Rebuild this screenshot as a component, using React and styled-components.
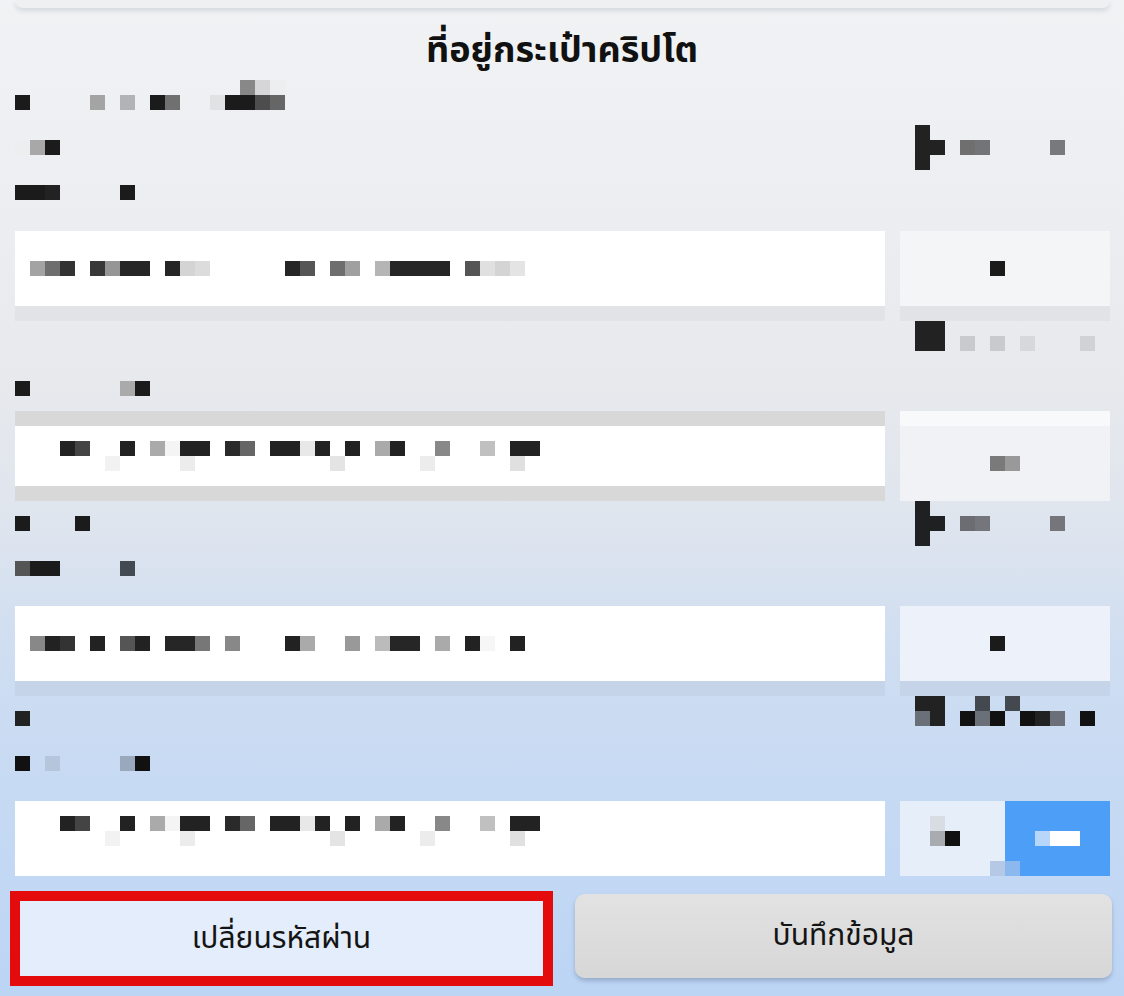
import React from "react";
import styled, { createGlobalStyle } from "styled-components";

const GlobalStyle = createGlobalStyle`
  * { box-sizing: border-box; }
  html, body { margin: 0; padding: 0; }
  body {
    width: 1124px;
    min-height: 996px;
    overflow: hidden;
    font-family: "Noto Sans Thai", "Noto Sans Thai UI", "Loma", "Garuda", "Noto Sans", sans-serif;
    background: linear-gradient(180deg, #f0f2f4 0px, #eceef1 200px, #e7e9ed 380px, #dfe5ee 520px, #d0def1 640px, #c7daf3 780px, #bcd5f5 996px);
  }
`;

const CELL = 15;

const Page = styled.main`
  width: 1124px;
  min-height: 996px;
  display: flex;
  flex-direction: column;
`;

const TopCard = styled.div`
  height: 8px;
  margin: 0 14px 0 15px;
  background: #eef0f2;
  border-radius: 0 0 10px 10px;
  box-shadow: 0 3px 5px rgba(60, 70, 90, 0.14);
`;

const Title = styled.h1`
  margin: 14px 0 0;
  height: 58px;
  line-height: 58px;
  text-align: center;
  font-size: 36px;
  font-weight: 700;
  color: #111;
`;

const Columns = styled.div`
  display: grid;
  grid-template-columns: 870px 210px;
  column-gap: 15px;
  padding: 0 14px 0 15px;
  height: ${(p) => p.$h}px;
`;

const SideLabel = styled.div`
  padding-left: 15px;
`;

const PixelSvg = styled.svg`
  display: block;
`;

const Pixels = ({ cells, w, h }) => (
  <PixelSvg width={w} height={h} viewBox={`0 0 ${w} ${h}`} shapeRendering="crispEdges">
    {cells.map(([r, c, fill, cw = 1, ch = 1], i) => (
      <rect key={i} x={c * CELL} y={r * CELL} width={cw * CELL} height={ch * CELL} fill={fill} />
    ))}
  </PixelSvg>
);

const Box = styled.div`
  height: ${(p) => p.$h}px;
  background: ${(p) => p.$bg};
  border-top: ${(p) => p.$top || 0}px solid ${(p) => p.$topColor || p.$edge || "transparent"};
  border-bottom: ${(p) => p.$bottom || 0}px solid ${(p) => p.$edge || "transparent"};
  overflow: hidden;
`;

const SplitSide = styled.div`
  display: grid;
  grid-template-columns: 105px 105px;
  height: 75px;
`;

const Half = styled.div`
  background: ${(p) => p.$bg};
`;

const ButtonRow = styled.div`
  display: flex;
  align-items: flex-start;
  gap: 22px;
  padding: 15px 12px 0 10px;
`;

const OutlineButton = styled.button`
  width: 543px;
  height: 95px;
  border: 10px solid #e30b0b;
  background: #e3edfb;
  font-family: inherit;
  font-size: 30px;
  color: #141414;
  padding: 0;
`;

const SaveButton = styled.button`
  width: 537px;
  height: 84px;
  margin-top: 3px;
  border: none;
  border-radius: 10px;
  background: linear-gradient(180deg, #e2e2e2 0%, #d7d7d7 100%);
  box-shadow: 0 3px 4px rgba(60, 70, 100, 0.28);
  font-family: inherit;
  font-size: 30px;
  color: #141414;
  padding: 0;
`;

const K = "#1b1b1b";
const D = "#262626";

const header1L = [
  [0, 15, "#888888"], [0, 16, "#d6d6d8"], [0, 17, "#eceef0"],
  [1, 0, K], [1, 5, "#a4a4a4"], [1, 7, "#b1b3b5"], [1, 9, K], [1, 10, "#707070"],
  [1, 13, "#e0e2e4"], [1, 14, K, 2], [1, 16, "#4d4d4d"], [1, 17, "#666666"],
  [4, 0, "#eceef0"], [4, 1, "#a8a8a8"], [4, 2, K],
  [7, 0, K, 2], [7, 2, "#222222"], [7, 7, K],
];
const labelIconR = [
  [3, 0, "#222222", 1, 3], [4, 1, "#222222"], [4, 3, "#6f6f6f"], [4, 4, "#727478"], [4, 9, "#77797c"],
];
const header2L = [[4, 0, K], [4, 7, "#aaaaaa"], [4, 8, K]];
const header2R = [
  [0, 0, "#222222", 2, 2], [1, 3, "#c8cacd"], [1, 5, "#c8cacd"], [1, 7, "#d6d8db"], [1, 11, "#d0d2d5"],
];
const header3L = [
  [1, 0, K], [1, 4, K],
  [4, 0, "#555555"], [4, 1, K, 2], [4, 7, "#444a52"],
];
const header3R = [
  [0, 0, "#1f2022", 1, 3], [1, 1, "#1f2022"], [1, 3, "#6b6d72"], [1, 4, "#74767b"], [1, 9, "#74767b"],
];
const header4L = [
  [1, 0, "#222222"],
  [4, 0, "#111111"], [4, 2, "#b5c5dc"], [4, 7, "#99a8bd"], [4, 8, "#111111"],
];
const header4R = [
  [0, 0, "#222222", 2], [0, 4, "#444950"], [0, 6, "#444950"],
  [1, 0, "#6b7078"], [1, 1, "#222222"], [1, 3, "#111111"], [1, 4, "#6b7078"], [1, 5, "#111111"],
  [1, 7, "#111111"], [1, 8, "#222222"], [1, 9, "#6b7078"], [1, 11, "#111111"],
];

const text1 = [
  [2, 1, "#a3a3a3"], [2, 2, "#6e6e6e"], [2, 3, "#333333"],
  [2, 5, "#383838"], [2, 6, "#969696"], [2, 7, D, 2],
  [2, 10, D], [2, 11, "#d4d4d4"], [2, 12, "#dcdcdc"],
  [2, 18, D], [2, 19, "#555555"], [2, 21, "#6e6e6e"], [2, 22, "#a0a0a0"],
  [2, 24, "#b5b5b5"], [2, 25, D, 4], [2, 30, "#555555"], [2, 31, "#e0e0e0"], [2, 32, "#d4d4d4"], [2, 33, "#e4e4e4"],
];
const addressText = (r) => [
  [r, 3, "#222222"], [r, 4, "#444444"], [r, 7, "#222222"], [r, 9, "#aaaaaa"], [r, 10, "#f4f4f4"],
  [r, 11, "#222222", 2], [r, 14, "#2a2a2a"], [r, 15, "#666666"], [r, 17, "#222222", 2],
  [r, 19, "#e8e8e8"], [r, 20, "#222222"], [r, 22, "#222222"], [r, 24, "#aaaaaa"], [r, 25, "#222222"],
  [r, 28, "#888888"], [r, 31, "#c0c0c0"], [r, 33, "#222222", 2],
  [r + 1, 6, "#f2f2f2"], [r + 1, 11, "#ececec"], [r + 1, 21, "#e4e4e4"], [r + 1, 27, "#ececec"], [r + 1, 33, "#e0e0e0"],
];
const text3 = [
  [2, 1, "#888888"], [2, 2, "#222222"], [2, 3, "#333333"], [2, 5, "#222222"], [2, 7, "#555555"], [2, 8, "#222222"],
  [2, 10, D, 2], [2, 12, "#777777"], [2, 14, "#888888"], [2, 18, "#222222"], [2, 19, "#aaaaaa"],
  [2, 22, "#999999"], [2, 24, "#bbbbbb"], [2, 25, D, 2], [2, 28, "#aaaaaa"], [2, 30, "#222222"],
  [2, 31, "#f6f6f6"], [2, 33, "#222222"],
];

export default function App() {
  return (
    <>
      <GlobalStyle />
      <Page>
        <TopCard />
        <Title>ที่อยู่กระเป๋าคริปโต</Title>

        <Columns $h={151}>
          <Pixels w={300} h={150} cells={header1L} />
          <SideLabel><Pixels w={195} h={150} cells={labelIconR} /></SideLabel>
        </Columns>
        <Columns $h={90}>
          <Box $h={90} $bg="#ffffff" $bottom={15} $edge="#e2e3e6">
            <Pixels w={870} h={75} cells={text1} />
          </Box>
          <Box $h={90} $bg="#f4f5f7" $bottom={15} $edge="#e2e3e6">
            <Pixels w={210} h={75} cells={[[2, 6, K]]} />
          </Box>
        </Columns>

        <Columns $h={90}>
          <Pixels w={300} h={90} cells={header2L} />
          <SideLabel><Pixels w={195} h={90} cells={header2R} /></SideLabel>
        </Columns>
        <Columns $h={90}>
          <Box $h={90} $bg="#ffffff" $top={15} $bottom={15} $edge="#d8d8d8">
            <Pixels w={870} h={60} cells={addressText(1)} />
          </Box>
          <Box $h={90} $bg="#f0f2f5" $top={15} $topColor="#f8f9fb">
            <Pixels w={210} h={75} cells={[[2, 6, "#7a7a7a"], [2, 7, "#999999"]]} />
          </Box>
        </Columns>

        <Columns $h={105}>
          <Pixels w={300} h={105} cells={header3L} />
          <SideLabel><Pixels w={195} h={105} cells={header3R} /></SideLabel>
        </Columns>
        <Columns $h={90}>
          <Box $h={90} $bg="#ffffff" $bottom={15} $edge="#c6d4e9">
            <Pixels w={870} h={75} cells={text3} />
          </Box>
          <Box $h={90} $bg="#edf2fa" $bottom={15} $edge="#c6d4e9">
            <Pixels w={210} h={75} cells={[[2, 6, K]]} />
          </Box>
        </Columns>

        <Columns $h={105}>
          <Pixels w={300} h={105} cells={header4L} />
          <SideLabel><Pixels w={195} h={105} cells={header4R} /></SideLabel>
        </Columns>
        <Columns $h={75}>
          <Box $h={75} $bg="#ffffff">
            <Pixels w={870} h={75} cells={addressText(1)} />
          </Box>
          <SplitSide>
            <Half $bg="#e6eefa">
              <Pixels w={105} h={75} cells={[[1, 2, "#d8dce3"], [2, 2, "#a8abb0"], [2, 3, "#111111"], [4, 6, "#b5c9e6"]]} />
            </Half>
            <Half $bg="#4d9ef6">
              <Pixels w={105} h={75} cells={[[2, 2, "#b8d6fa"], [2, 3, "#ffffff", 2], [4, 0, "#8bb8ee"]]} />
            </Half>
          </SplitSide>
        </Columns>

        <ButtonRow>
          <OutlineButton type="button">เปลี่ยนรหัสผ่าน</OutlineButton>
          <SaveButton type="button">บันทึกข้อมูล</SaveButton>
        </ButtonRow>
      </Page>
    </>
  );
}
